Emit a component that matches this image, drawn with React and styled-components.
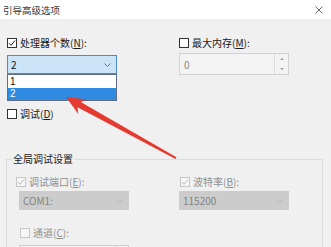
import React from "react";
import styled, { createGlobalStyle } from "styled-components";

const GlobalStyle = createGlobalStyle`
  html, body {
    margin: 0;
    padding: 0;
    background: #f0f0f0;
  }
  body {
    font-family: "Noto Sans CJK SC", "Noto Sans", sans-serif;
  }
`;

function Check({ checked, disabled }) {
  return (
    <Box $disabled={disabled}>
      {checked && (
        <svg width="8" height="8" viewBox="0 0 8 8">
          <polyline
            points="1,4.2 3,6.3 7,1.5"
            fill="none"
            stroke={disabled ? "#b9b9b9" : "#222"}
            strokeWidth="1"
          />
        </svg>
      )}
    </Box>
  );
}

function Chevron({ color }) {
  return (
    <svg width="7" height="4" viewBox="0 0 7 4">
      <polyline points="0.5,0.5 3.5,3.5 6.5,0.5" fill="none" stroke={color} strokeWidth="0.9" />
    </svg>
  );
}

function Option({ checked, disabled, indent, children }) {
  return (
    <CheckRow $disabled={disabled} $indent={indent}>
      <Check checked={checked} disabled={disabled} />
      <span>{children}</span>
    </CheckRow>
  );
}

export default function App() {
  return (
    <Window>
      <GlobalStyle />
      <TitleBar>
        <span>引导高级选项</span>
        <svg width="8" height="8" viewBox="0 0 8 8">
          <path d="M0.5 0.5 L7.5 7.5 M7.5 0.5 L0.5 7.5" stroke="#444" strokeWidth="0.8" />
        </svg>
      </TitleBar>

      <Top>
        <Column>
          <Option checked>
            处理器个数(<u>N</u>):
          </Option>
          <ComboWrap $gap={6}>
            <Combo $variant="focus">
              <span>2</span>
              <Chevron color="#666" />
            </Combo>
            <List>
              <Item>1</Item>
              <Item $selected>2</Item>
            </List>
          </ComboWrap>
          <Spacer $h={33} />
          <Option>
            调试(<u>D</u>)
          </Option>
        </Column>

        <Column>
          <Option>
            最大内存(<u>M</u>):
          </Option>
          <Spin>
            <SpinValue>0</SpinValue>
            <SpinButtons>
              <Tri $up />
              <Tri />
            </SpinButtons>
          </Spin>
        </Column>
      </Top>

      <Group>
        <Legend>全局调试设置</Legend>
        <GroupGrid>
          <Column>
            <Option checked disabled indent={-3}>
              调试端口(<u>E</u>):
            </Option>
            <ComboWrap $gap={3}>
              <Combo $variant="disabled">
                <span>COM1:</span>
                <Chevron color="#b4b4b4" />
              </Combo>
            </ComboWrap>
            <Spacer $h={16} />
            <Option disabled indent={1}>
              通道(<u>C</u>):
            </Option>
            <Field>
              <FieldButton />
            </Field>
          </Column>
          <Column>
            <Option checked disabled indent={1}>
              波特率(<u>B</u>):
            </Option>
            <ComboWrap $gap={3}>
              <Combo $variant="disabled">
                <span>115200</span>
                <Chevron color="#b4b4b4" />
              </Combo>
            </ComboWrap>
          </Column>
        </GroupGrid>
      </Group>

      <Arrow width="331" height="247" viewBox="0 0 331 247">
        <polygon
          points="66,97 87,99.4 80.7,102 176.5,157.2 175.5,159 77.5,107.3 78.3,114"
          fill="#e53a30"
        />
      </Arrow>
    </Window>
  );
}

const Window = styled.div`
  position: relative;
  width: 331px;
  height: 247px;
  overflow: hidden;
  background: #f0f0f0;
`;

const TitleBar = styled.div`
  height: 19px;
  background: #ffffff;
  display: flex;
  align-items: center;
  justify-content: space-between;
  padding: 0 8px 0 3px;
  font-size: 9.5px;
  color: #3a3a3a;
`;

const Top = styled.div`
  display: grid;
  grid-template-columns: 110px 110px;
  column-gap: 62px;
  padding: 17px 0 0 7px;
`;

const Column = styled.div`
  display: flex;
  flex-direction: column;
`;

const Spacer = styled.div`
  height: ${(p) => p.$h}px;
`;

const CheckRow = styled.label`
  display: flex;
  align-items: center;
  gap: 3px;
  height: 13px;
  margin-left: ${(p) => p.$indent || 0}px;
  font-size: 10px;
  line-height: 13px;
  white-space: nowrap;
  color: ${(p) => (p.$disabled ? "#8f8f8f" : "#1a1a1a")};

  & u {
    text-decoration-thickness: 1px;
    text-underline-offset: 1px;
  }
`;

const Box = styled.span`
  box-sizing: border-box;
  width: 10px;
  height: 10px;
  flex: none;
  display: flex;
  align-items: center;
  justify-content: center;
  border: 1px solid ${(p) => (p.$disabled ? "#c6c6c6" : "#333333")};
  background: ${(p) => (p.$disabled ? "#f6f6f6" : "#ffffff")};
`;

const ComboWrap = styled.div`
  position: relative;
  margin-top: ${(p) => p.$gap}px;
`;

const Combo = styled.div`
  box-sizing: border-box;
  height: 19px;
  display: flex;
  align-items: center;
  justify-content: space-between;
  padding: 0 5px 0 3px;
  font-size: 10px;
  border: 1px solid ${(p) => (p.$variant === "focus" ? "#4a8ad4" : "#cccccc")};
  background: ${(p) => (p.$variant === "focus" ? "#cce4f7" : "#cccccc")};
  color: ${(p) => (p.$variant === "focus" ? "#111" : "#838383")};
`;

const List = styled.div`
  position: absolute;
  top: 100%;
  left: 0;
  right: 0;
  z-index: 2;
  box-sizing: border-box;
  border: 1px solid #5f6f86;
  background: #ffffff;
  padding-top: 1px;
`;

const Item = styled.div`
  height: 12px;
  line-height: 12px;
  padding-left: 2px;
  font-family: "Liberation Sans", sans-serif;
  font-size: 10px;
  background: ${(p) => (p.$selected ? "#2f8be2" : "#ffffff")};
  color: ${(p) => (p.$selected ? "#ffffff" : "#111111")};
`;

const Spin = styled.div`
  box-sizing: border-box;
  height: 22px;
  margin-top: 4px;
  display: flex;
  border: 1px solid #d2d2d2;
  background: #f3f3f3;
`;

const SpinValue = styled.div`
  flex: 1;
  display: flex;
  align-items: center;
  padding-left: 4px;
  font-size: 10px;
  color: #8a8a8a;
`;

const SpinButtons = styled.div`
  width: 13px;
  display: flex;
  flex-direction: column;
  border-left: 1px solid #dedede;
`;

const Tri = styled.div`
  flex: 1;
  display: flex;
  align-items: center;
  justify-content: center;

  &::before {
    content: "";
    border-left: 2px solid transparent;
    border-right: 2px solid transparent;
    ${(p) =>
      p.$up ? "border-bottom: 2px solid #9a9a9a;" : "border-top: 2px solid #9a9a9a;"}
  }
`;

const Group = styled.fieldset`
  margin: 32px 8px 0 6px;
  padding: 9px 0 0 12px;
  border: 1px solid #dcdcdc;
  min-width: 0;
`;

const Legend = styled.legend`
  margin-left: -7px;
  padding: 0 1px;
  font-size: 10px;
  line-height: 14px;
  color: #1a1a1a;
`;

const GroupGrid = styled.div`
  display: grid;
  grid-template-columns: 110px 110px;
  column-gap: 50px;
`;

const Field = styled.div`
  box-sizing: border-box;
  height: 19px;
  margin-top: 6px;
  display: flex;
  justify-content: flex-end;
  border: 1px solid #cfcfcf;
  background: #f3f3f3;
`;

const FieldButton = styled.div`
  width: 12px;
  border-left: 1px solid #d6d6d6;
`;

const Arrow = styled.svg`
  position: absolute;
  top: 0;
  left: 0;
  pointer-events: none;
  z-index: 5;
`;
